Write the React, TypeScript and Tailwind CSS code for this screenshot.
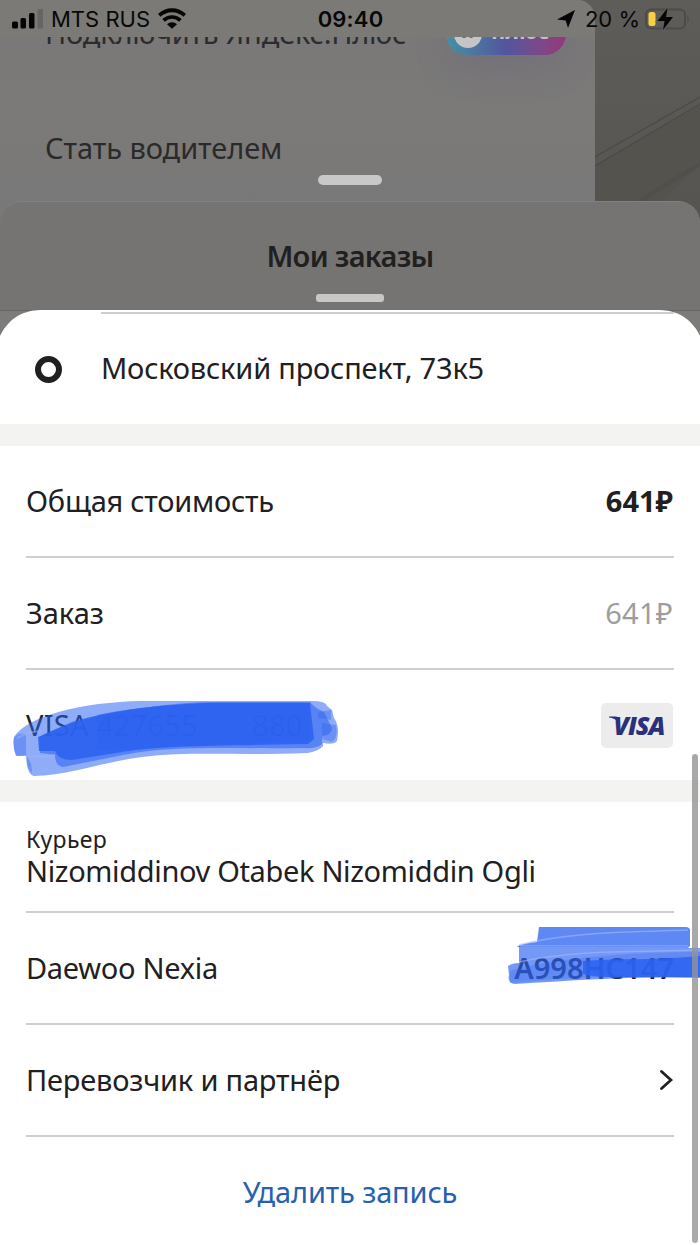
import React from 'react';

const Signal = () => (
  <svg className="h-[20px] w-[32px]" viewBox="0 0 32 20">
    <rect x="0" y="12.5" width="6" height="7" rx="1.5" fill="#050505" />
    <rect x="8.5" y="9" width="5.5" height="10.5" rx="1.5" fill="#050505" />
    <rect x="17" y="4" width="5.5" height="15.5" rx="1.5" fill="#050505" />
    <rect x="25.5" y="0" width="5.5" height="19.5" rx="1.5" fill="#666563" />
  </svg>
);

const Wifi = () => (
  <svg className="h-[21px] w-[28px]" viewBox="0 0 28 21" fill="none" stroke="#050505">
    <path d="M1.3 7.3A18.5 18.5 0 0 1 26.7 7.3" strokeWidth="3.8" />
    <path d="M5.6 12.4A12 12 0 0 1 22.4 12.4" strokeWidth="3.6" />
    <path d="M9 16.2A7.2 7.2 0 0 1 19 16.2L14 20.8Z" fill="#050505" stroke="none" />
  </svg>
);

const Battery = () => (
  <svg className="h-[24px] w-[46px]" viewBox="0 0 46 24">
    <rect x="1" y="2.5" width="39" height="19" rx="5" fill="none" stroke="#4c4b49" strokeWidth="2" />
    <path d="M42.5 8.5Q45 12 42.5 15.5Z" fill="#4c4b49" />
    <rect x="3.5" y="5" width="7" height="14" rx="2.5" fill="#f7d046" />
    <path d="M22.5 1L12.5 14H19.5L18 23L28 10H21Z" fill="#050505" stroke="#5e5d5a" strokeWidth="2.4" paintOrder="stroke" />
  </svg>
);

const StatusBar = () => (
  <div className="absolute inset-x-0 top-0 z-10 flex h-[37px] items-center font-['Inter'] text-[22px] leading-none text-[#080808]">
    <div className="absolute left-0 top-0 -z-10 h-full w-[595px] rounded-tr-[18px] bg-[#7b7a77]" />
    <div className="flex flex-1 items-center pl-[12px]">
      <Signal />
      <span className="ml-[7px] mr-[7px] w-[100px] whitespace-nowrap">MTS RUS</span>
      <Wifi />
    </div>
    <span className="relative right-px font-semibold tracking-[0.2px]">09:40</span>
    <div className="flex flex-1 items-center justify-end pr-[9px]">
      <svg className="mr-[10px] h-[18px] w-[18px]" viewBox="0 0 17 17">
        <path d="M17 0L10.4 17L8.2 9.8L0 9Z" fill="#050505" />
      </svg>
      <span className="mr-[5px] whitespace-nowrap">20 %</span>
      <Battery />
    </div>
  </div>
);

const Drawer = () => (
  <div className="flex h-[230px] bg-gradient-to-b from-[#5e5d5a] to-[#555451]">
    <div className="w-[595px] rounded-tr-[18px] bg-gradient-to-b from-[#7a7878] via-[#7b7a78] to-[#797878] pl-[45px]">
      <div className="flex h-[60px] items-start justify-between pr-[29px]">
        <span className="mt-[13px] whitespace-nowrap text-[29px] leading-[40px] tracking-[-0.2px] text-[#2d2c2c]">Подключить Яндекс.Плюс</span>
        <div className="mt-[13px] flex h-[42px] w-[120px] items-center rounded-full bg-gradient-to-r from-[#4391a3] via-[#51559d] to-[#963779] pl-[8px] text-[22px] font-bold text-[#c4c0ca] shadow-[0_14px_34px_rgba(90,75,130,0.2)]">
          <span className="mr-[9px] flex h-[28px] w-[28px] items-center justify-center rounded-full bg-[#c5c5c6] text-[18px] text-[#426caa]">
            <span className="-mt-[5px]">Я</span>
          </span>
          <span className="-mt-[8px]">плюс</span>
        </div>
      </div>
      <span className="mt-[68px] block whitespace-nowrap text-[29px] leading-[40px] tracking-[-0.05px] text-[#2b2a2a]">Стать водителем</span>
    </div>
    <svg className="h-full flex-1" viewBox="0 0 105 230" fill="none" stroke="#4b4a47" strokeWidth="1.2">
      <path d="M0 166L105 106V165L35 230H0Z" fill="#55534e" stroke="none" />
      <path d="M0 157L105 97M0 166L105 104" />
      <path d="M40 204L105 164" stroke="#504f4b" strokeWidth="4" />
    </svg>
  </div>
);

const Row = ({ label, tracking = '', children }: { label: string; tracking?: string; children?: React.ReactNode }) => (
  <div className="mx-[26px] flex h-[112px] items-center justify-between border-b-2 border-[#cfcfcf]">
    <span className={`whitespace-nowrap ${tracking}`}>{label}</span>
    {children}
  </div>
);

const Divider = () => <div className="h-[22px] bg-[#f3f3f2]" />;

const VisaBadge = () => (
  <div className="relative mr-px flex h-[45px] w-[72px] items-center justify-center rounded-[5px] bg-[#ececed] pl-[4px] font-['Open_Sans'] text-[25px] font-extrabold italic leading-none tracking-[-1px] text-[#29317c]">
    VISA
    <svg className="absolute left-[8px] top-[13px] h-[7px] w-[11px]" viewBox="0 0 11 7">
      <path d="M0 0.5H7Q10 0.5 11 7Q6 2 0 1.5Z" fill="#29317c" />
    </svg>
  </div>
);

// marker strokes over the card number
const CardScribble = () => (
  <svg className="absolute left-[-14px] top-[30px] h-[80px] w-[330px] blur-[0.6px]" viewBox="0 0 330 80" fill="#2b62f1">
    <path d="M2 37C15 16 70 2 130 1H300Q314 1 315 6L320 10L322 18Q328 26 325 41Q322 45 311 43V46Q307 51 296 53C230 56 180 51 130 57C90 62 55 76 22 76Q15 75 14 56L4 56Q0 47 2 37Z" opacity="0.53" />
    <path d="M28 37C55 20 135 3 200 2H298Q303 8 312 12L320 28Q320 35 310 36V44Q306 49 290 48C220 49 160 45 111 55L51 67Q43 66 43 55L28 53Z" opacity="0.55" />
    <path d="M26 37L60 22C100 10 145 5 195 3H298L302 39L296 44C210 46 150 45 110 52L60 60Q46 60 43 51H27Z" opacity="0.85" />
    <path d="M85 15C120 8 150 5 195 3H297V40L85 50Z" opacity="0.55" />
    <path d="M2 38Q5 33 14 34V55L5 56Q1 50 2 38ZM15 57Q20 62 20 73Q14 68 15 57ZM306 12L319 10V20L306 18ZM310 23L324 25Q326 38 320 42L310 39Z" opacity="0.35" />
    <path d="M5 38Q18 31 30 31M16 56Q32 58 43 55" fill="none" stroke="#a0b5f7" strokeWidth="2" opacity="0.5" />
  </svg>
);

// marker strokes over the licence plate
const PlateScribble = () => (
  <svg className="absolute right-0 top-[12px] h-[60px] w-[193px] blur-[0.5px]" viewBox="0 0 193 60" fill="#2b62f1">
    <path d="M32 2H178Q184 2 183 7V20Q183 23 178 22H10Q12 19 30 17Z" opacity="0.76" />
    <path d="M12 21H180L182 23H193V53C130 51 70 55 8 59Q0 58 2 50L1 41Q5 38 12 38Z" opacity="0.66" />
    <path d="M3 46C50 31 140 27 193 27V52C140 52 80 50 3 58Z" opacity="0.25" />
    <path d="M76 36C110 33 140 36 193 31V52H103Q85 52 76 49Z" opacity="0.85" />
    <path d="M12 20C60 7 120 7 181 5M12 37C65 25 120 27 193 25M13 21H181" fill="none" stroke="#a2b8fb" strokeWidth="1.5" opacity="0.6" />
  </svg>
);

// a little wider than the screen, so its round corners run off the edge
const OrderSheet = () => (
  <div className="relative -mx-[4px] h-[935px] overflow-hidden rounded-t-[44px] bg-white px-[4px] text-[29px] leading-[36px] text-[#21201f]">
    <div className="ml-[101px] mt-[2px] h-[2px] w-[573px] bg-[#cfcfcf]" />
    <div className="flex h-[110px] items-center pl-[35px]">
      <div className="h-[27px] w-[27px] rounded-full border-[6.5px] border-[#21201f]" />
      <span className="-mt-[2px] ml-[39px] whitespace-nowrap tracking-[-0.2px]">Московский проспект, 73к5</span>
    </div>
    <Divider />
    <Row label="Общая стоимость" tracking="tracking-[-0.25px]">
      <span className="pr-px font-bold">641₽</span>
    </Row>
    <Row label="Заказ">
      <span className="pr-px tracking-[0.3px] text-[#9e9d9d]">641₽</span>
    </Row>
    <div className="relative mx-[26px] flex h-[110px] items-center justify-between">
      <span className="whitespace-pre tracking-[0.3px]">VISA 427655<span className="ml-[54px]">880</span></span>
      <CardScribble />
      <VisaBadge />
    </div>
    <Divider />
    <div className="mx-[26px] flex h-[111px] flex-col justify-center whitespace-nowrap border-b-2 border-[#cfcfcf] pb-[3px]">
      <span className="text-[23px] leading-[30px] tracking-[0.35px]">Курьер</span>
      <span className="leading-[33px] tracking-[-0.34px]">Nizomiddinov Otabek Nizomiddin Ogli</span>
    </div>
    <div className="relative">
      <Row label="Daewoo Nexia" tracking="tracking-[-0.3px]">
        <span className="font-semibold">А998НС147</span>
      </Row>
      <PlateScribble />
    </div>
    <Row label="Перевозчик и партнёр" tracking="tracking-[-0.2px]">
      <svg className="mr-px h-[22px] w-[14px]" viewBox="0 0 14 22" fill="none" stroke="#21201f" strokeWidth="2.8" strokeLinecap="round">
        <path d="M2.5 2.5L12 11L2.5 19.5" />
      </svg>
    </Row>
    <button className="flex h-[110px] w-full items-center justify-center tracking-[-0.15px] text-[#2561b0]">Удалить запись</button>
    <div className="absolute right-[6px] top-[444px] h-[489px] w-[6px] rounded-full bg-[#949494]/80" />
  </div>
);

export default function App() {
  return (
    <div className="relative h-[1245px] w-[700px] overflow-hidden bg-[#7b7b7a] font-['Noto_Sans',sans-serif]">
      <StatusBar />
      <Drawer />
      <div className="relative -mt-[29px] h-[110px] rounded-t-[22px] border-b border-t border-b-[#666563] border-t-[#80807e] bg-[#757472] text-center">
        <div className="absolute left-[318px] top-[-27px] h-[10px] w-[64px] rounded-full bg-[#c8c8c8]" />
        <h1 className="pt-[34px] text-[29px] font-semibold leading-[40px] tracking-[-0.7px] text-[#21201f]">Мои заказы</h1>
        <div className="mx-auto mt-[18px] h-[8px] w-[68px] rounded-[3px] bg-[#c7c7c7]" />
      </div>
      <div className="relative -mt-px">
        <OrderSheet />
      </div>
    </div>
  );
}
